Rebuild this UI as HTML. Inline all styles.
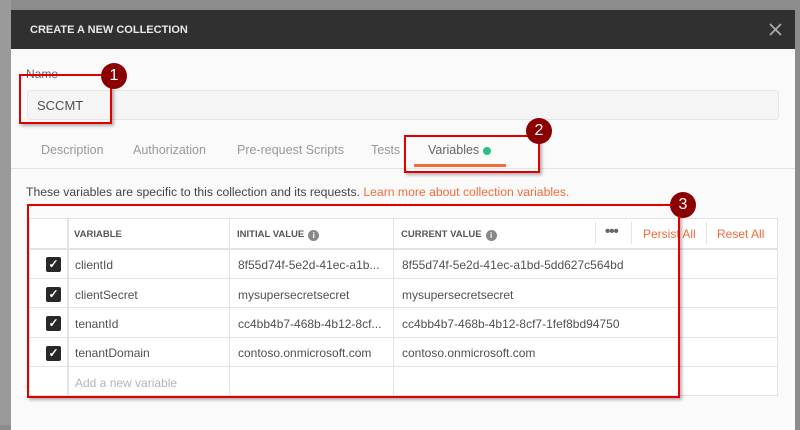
<!DOCTYPE html>
<html><head><style>
*{box-sizing:border-box;margin:0;padding:0}
body{width:800px;height:425px;overflow:hidden;background:#8c8c8c;font-family:"Liberation Sans",sans-serif;position:relative}
.a{position:absolute}
.modal{left:11px;top:10px;width:784px;height:420px;background:#fafafa}
.hdr{left:11px;top:10px;width:784px;height:39px;background:#303030;color:#e8e8e8;font-size:11px;font-weight:bold;padding:14px 0 0 19px}
.t{font-size:12px;color:#505050}
.g{color:#999}
.line{background:#e3e3e3}
.cb{width:15px;height:15px;background:#282828;border-radius:2px;color:#fff;font-size:12px;line-height:15px;text-align:center;font-weight:bold}
.red{border:2.5px solid #e00000;box-shadow:2px 2px 3px rgba(0,0,0,.3)}
.circ{width:26px;height:26px;border-radius:50%;background:#8b0000;color:#fff;font-size:16px;text-align:center;line-height:26px}
.o{color:#f26b3a}
.i{display:inline-block;width:11px;height:11px;border-radius:50%;background:#888;color:#fff;font-size:8px;text-align:center;line-height:11px;vertical-align:-1px;margin-left:4px}
</style></head><body>
<div class="a" style="left:0;top:0;width:11px;height:425px;background:#9a9a9a"></div>
<div class="a modal"></div>
<div class="a hdr">CREATE A NEW COLLECTION</div>
<svg class="a" style="left:769px;top:23px" width="13" height="13"><path d="M1 1L12 12M12 1L1 12" stroke="#aaa" stroke-width="1.8"/></svg>
<div class="a t" style="left:26px;top:67px;color:#666">Name</div>
<div class="a" style="left:27px;top:90px;width:752px;height:30px;background:#f5f5f5;border:1px solid #e6e6e6;border-radius:3px"></div>
<div class="a t" style="left:37px;top:98px;font-size:13px">SCCMT</div>
<div class="a t g" style="left:41px;top:143px;font-size:12.5px">Description</div>
<div class="a t g" style="left:133px;top:143px;font-size:12.5px">Authorization</div>
<div class="a t g" style="left:237px;top:143px;font-size:12.5px">Pre-request Scripts</div>
<div class="a t g" style="left:371px;top:143px;font-size:12.5px">Tests</div>
<div class="a t" style="left:428px;top:143px;font-size:12.5px;color:#666">Variables</div>
<div class="a" style="left:483px;top:147px;width:8px;height:8px;border-radius:50%;background:#2bbf83"></div>
<div class="a" style="left:414px;top:164px;width:92px;height:3px;background:#f26b3a"></div>
<div class="a line" style="left:11px;top:168px;width:784px;height:1px"></div>
<div class="a t" style="left:26px;top:185px;font-size:12.2px;color:#444">These variables are specific to this collection and its requests. <span class="o">Learn more about collection variables.</span></div>
<div class="a" style="left:29px;top:218px;width:749px;height:178px;background:#fff;border:1px solid #e3e3e3"></div>
<div class="a line" style="left:67px;top:218px;width:2px;height:178px"></div>
<div class="a line" style="left:229px;top:218px;width:1px;height:178px"></div>
<div class="a line" style="left:393px;top:218px;width:1px;height:178px"></div>
<div class="a line" style="left:595px;top:222px;width:1px;height:22px"></div>
<div class="a line" style="left:631px;top:222px;width:1px;height:22px"></div>
<div class="a line" style="left:706px;top:222px;width:1px;height:22px"></div>
<div class="a line" style="left:29px;top:248px;width:749px;height:2px"></div>
<div class="a line" style="left:29px;top:278px;width:749px;height:1px"></div>
<div class="a line" style="left:29px;top:307px;width:749px;height:1px"></div>
<div class="a line" style="left:29px;top:337px;width:749px;height:1px"></div>
<div class="a line" style="left:29px;top:366px;width:749px;height:1px"></div>
<div class="a" style="left:74px;top:229px;font-size:9.5px;font-weight:bold;color:#555">VARIABLE</div>
<div class="a" style="left:237px;top:229px;font-size:9.5px;font-weight:bold;color:#555">INITIAL VALUE<span class="i">i</span></div>
<div class="a" style="left:401px;top:229px;font-size:9.5px;font-weight:bold;color:#555">CURRENT VALUE<span class="i">i</span></div>
<div class="a" style="left:605px;top:223px;font-size:15px;color:#666;font-weight:bold;letter-spacing:-1px">•••</div>
<div class="a o" style="left:643px;top:227px;font-size:12px">Persist All</div>
<div class="a o" style="left:717px;top:227px;font-size:12px">Reset All</div>
<div class="a cb" style="left:46px;top:257px">✓</div>
<div class="a cb" style="left:46px;top:287px">✓</div>
<div class="a cb" style="left:46px;top:316px">✓</div>
<div class="a cb" style="left:46px;top:346px">✓</div>
<div class="a t" style="left:75px;top:258px">clientId</div>
<div class="a t" style="left:75px;top:288px">clientSecret</div>
<div class="a t" style="left:75px;top:317px">tenantId</div>
<div class="a t" style="left:75px;top:346px">tenantDomain</div>
<div class="a t" style="left:75px;top:376px;color:#b5b5b5">Add a new variable</div>
<div class="a t" style="left:238px;top:258px">8f55d74f-5e2d-41ec-a1b...</div>
<div class="a t" style="left:238px;top:288px">mysupersecretsecret</div>
<div class="a t" style="left:238px;top:317px">cc4bb4b7-468b-4b12-8cf...</div>
<div class="a t" style="left:238px;top:346px">contoso.onmicrosoft.com</div>
<div class="a t" style="left:402px;top:258px">8f55d74f-5e2d-41ec-a1bd-5dd627c564bd</div>
<div class="a t" style="left:402px;top:288px">mysupersecretsecret</div>
<div class="a t" style="left:402px;top:317px">cc4bb4b7-468b-4b12-8cf7-1fef8bd94750</div>
<div class="a t" style="left:402px;top:346px">contoso.onmicrosoft.com</div>
<div class="a red" style="left:19px;top:74px;width:93px;height:50px"></div>
<div class="a red" style="left:404px;top:135px;width:136px;height:38px"></div>
<div class="a red" style="left:27px;top:204px;width:653px;height:194px"></div>
<div class="a circ" style="left:101px;top:63px">1</div>
<div class="a circ" style="left:526px;top:118px">2</div>
<div class="a circ" style="left:670px;top:192px">3</div>
</body></html>
